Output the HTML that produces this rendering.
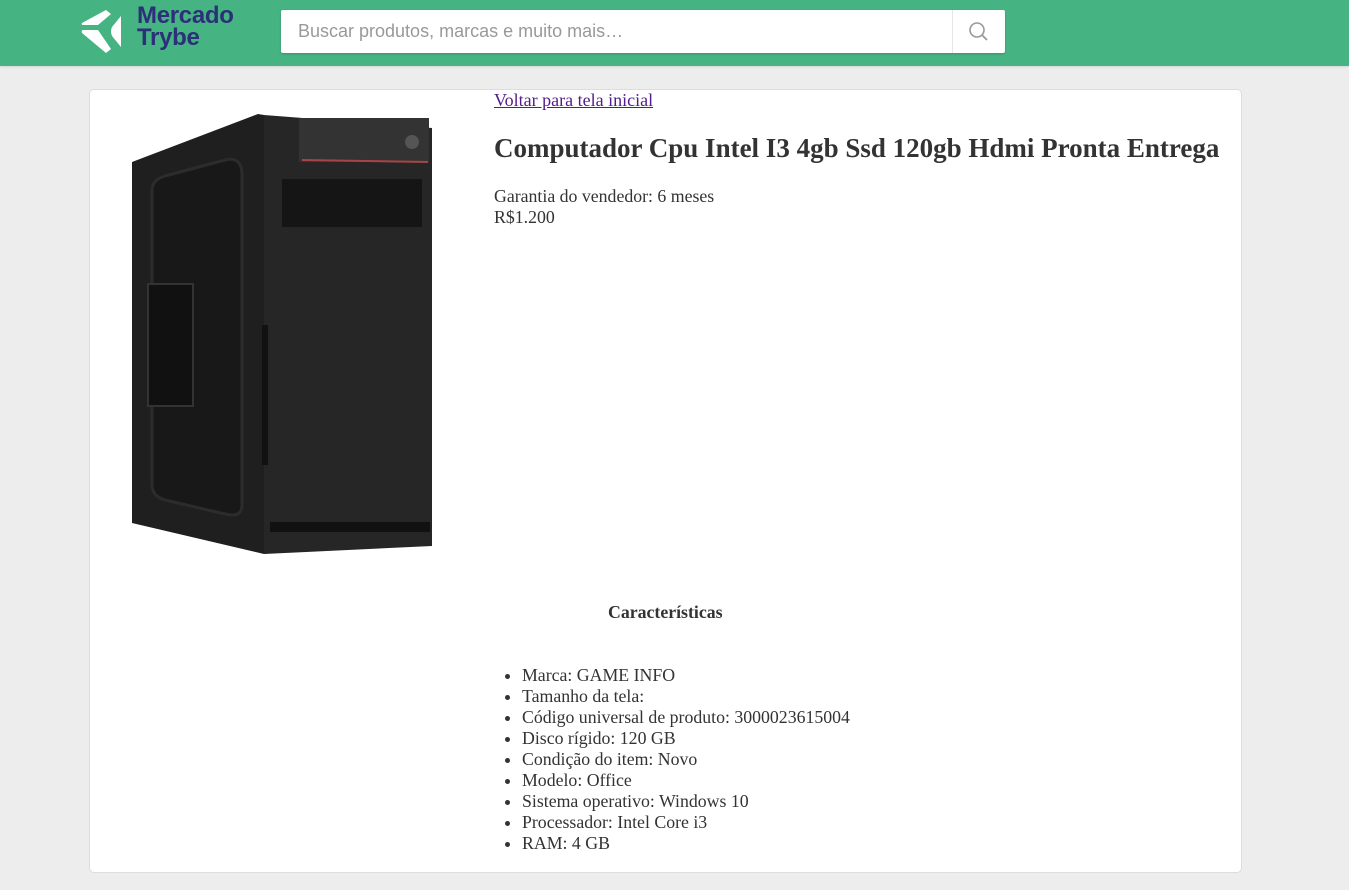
<!DOCTYPE html>
<html><head><meta charset="utf-8"><style>
body{margin:0;background:#ededed;font-family:"Liberation Serif",serif;color:#333;}
.hdr{position:absolute;left:0;top:0;width:1349px;height:66px;background:#46b482;box-shadow:0 1px 2px rgba(0,0,0,.1)}
.logo{position:absolute;left:137px;top:5px;color:#2c3078;font-family:"Liberation Sans",sans-serif;font-weight:bold;font-size:24px;line-height:22px;letter-spacing:-0.3px}
.search{position:absolute;left:281px;top:10px;width:724px;height:43px;background:#fff;border-radius:2px;box-shadow:0 1px 2px rgba(0,0,0,.2)}
.search span{position:absolute;left:17px;top:11px;font-family:"Liberation Sans",sans-serif;font-size:18px;color:#999}
.sbtn{position:absolute;right:0;top:0;width:52px;height:43px;border-left:1px solid #e6e6e6}
.card{position:absolute;left:89px;top:89px;width:1151px;height:782px;background:#fff;border:1px solid #ddd;border-radius:5px}
a{color:#551a8b;position:absolute;left:404px;top:0;font-size:18px;line-height:20px}
h1{position:absolute;left:404px;top:42px;margin:0;font-size:27px;line-height:32px;white-space:nowrap}
.info{position:absolute;left:404px;top:96px;font-size:17.8px;line-height:21px}
h3{position:absolute;left:518px;top:512px;margin:0;font-size:17.8px}
ul{position:absolute;left:392px;top:575px;margin:0;padding-left:40px;font-size:17.8px;line-height:21px}
</style></head><body>
<div class="hdr">
<svg style="position:absolute;left:80px;top:9px" width="44" height="45" viewBox="0 0 44 45"><path d="M26 1 L31 5 L18 16 L3 16 Q1 16 2 14 Z" fill="#fff"/><path d="M3 21 L18 21 L31 40 L26 44 L2 24 Q1 21 3 21Z" fill="#fff"/><path d="M41 7 L41 38 L32 27 Q30 22 32 18 Z" fill="#fff"/></svg>
<div class="logo">Mercado<br>Trybe</div>
<div class="search"><span>Buscar produtos, marcas e muito mais…</span><div class="sbtn"><svg width="52" height="43"><circle cx="24" cy="20" r="7" fill="none" stroke="#999" stroke-width="1.6"/><line x1="29" y1="25" x2="34" y2="30" stroke="#999" stroke-width="1.8"/></svg></div></div>
</div>
<div class="card">
<svg style="position:absolute;left:0;top:0" width="400" height="480">
<polygon points="42,72 168,24 174,25 174,464 42,433" fill="#1f1f1f"/>
<polygon points="174,25 342,38 342,456 174,464" fill="#262626"/>
<path d="M62 100 Q62 90 75 86 L135 70 Q152 66 152 85 L152 415 Q152 428 135 424 L75 410 Q62 406 62 395 Z" fill="#181818" stroke="#2c2c2c" stroke-width="3"/>
<rect x="58" y="194" width="45" height="122" fill="#111" stroke="#333" stroke-width="2"/>
<rect x="209" y="28" width="130" height="44" fill="#333"/>
<line x1="212" y1="70" x2="338" y2="72" stroke="#a44" stroke-width="2"/>
<rect x="192" y="89" width="140" height="48" fill="#151515"/>
<rect x="172" y="235" width="6" height="140" fill="#111"/>
<rect x="180" y="432" width="160" height="10" fill="#111"/>
<circle cx="322" cy="52" r="7" fill="#555"/>
</svg>
<a href="#">Voltar para tela inicial</a>
<h1>Computador Cpu Intel I3 4gb Ssd 120gb Hdmi Pronta Entrega</h1>
<div class="info">Garantia do vendedor: 6 meses<br>R$1.200</div>
<h3>Características</h3>
<ul><li>Marca: GAME INFO</li><li>Tamanho da tela:</li><li>Código universal de produto: 3000023615004</li><li>Disco rígido: 120 GB</li><li>Condição do item: Novo</li><li>Modelo: Office</li><li>Sistema operativo: Windows 10</li><li>Processador: Intel Core i3</li><li>RAM: 4 GB</li></ul>
</div>
</body></html>
